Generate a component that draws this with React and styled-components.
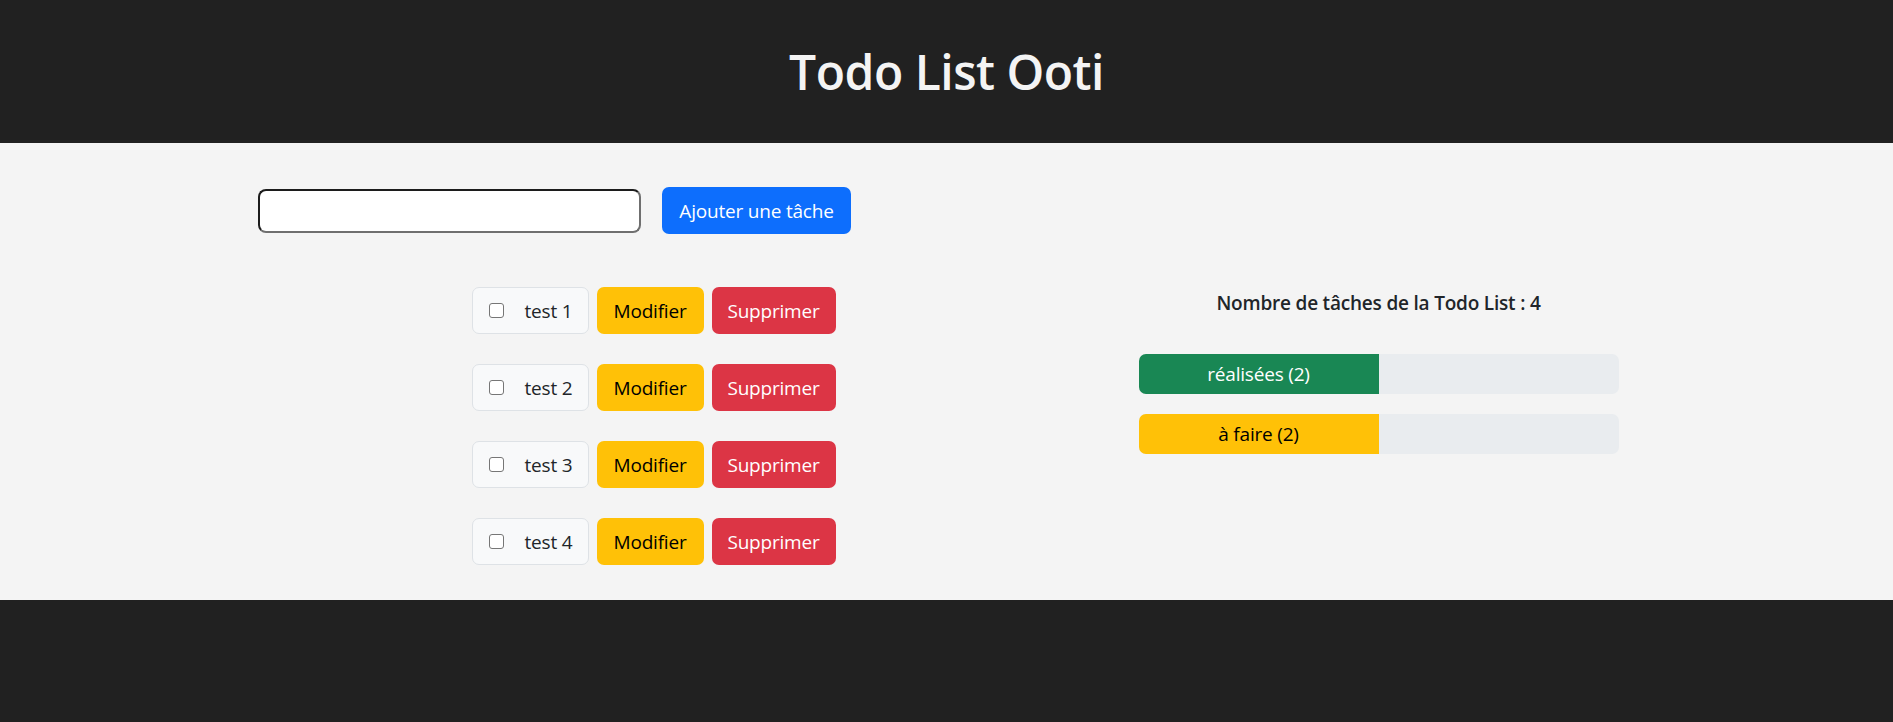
import styled, { createGlobalStyle } from "styled-components";

const tasks = [
  { id: 1, label: "test 1" },
  { id: 2, label: "test 2" },
  { id: 3, label: "test 3" },
  { id: 4, label: "test 4" },
];

const stats = [
  { id: "done", label: "réalisées (2)", value: 50, tone: "success" },
  { id: "todo", label: "à faire (2)", value: 50, tone: "warning" },
];

const tones = {
  primary: { bg: "#0d6efd", fg: "#ffffff" },
  warning: { bg: "#ffc107", fg: "#000000" },
  danger: { bg: "#dc3545", fg: "#ffffff" },
  success: { bg: "#198754", fg: "#ffffff" },
};

function App() {
  return (
    <>
      <GlobalStyle />
      <Header>
        <Title>Todo List Ooti</Title>
      </Header>
      <Main>
        <AddForm onSubmit={(e) => e.preventDefault()}>
          <TaskInput type="text" />
          <Button type="submit" tone="primary" width={189} height={47}>
            Ajouter une tâche
          </Button>
        </AddForm>
        <Columns>
          <TaskList>
            {tasks.map((task) => (
              <TaskRow key={task.id}>
                <TaskBox>
                  <Check type="checkbox" />
                  <TaskLabel>{task.label}</TaskLabel>
                </TaskBox>
                <Button tone="warning" width={107}>
                  Modifier
                </Button>
                <Button tone="danger" width={124}>
                  Supprimer
                </Button>
              </TaskRow>
            ))}
          </TaskList>
          <StatsPanel>
            <StatsTitle>Nombre de tâches de la Todo List : {tasks.length}</StatsTitle>
            <Bars>
              {stats.map((s) => (
                <Progress key={s.id}>
                  <ProgressFill tone={s.tone} style={{ width: `${s.value}%` }}>
                    {s.label}
                  </ProgressFill>
                </Progress>
              ))}
            </Bars>
          </StatsPanel>
        </Columns>
      </Main>
    </>
  );
}

export default App;

const GlobalStyle = createGlobalStyle`
  * {
    box-sizing: border-box;
  }
  body {
    margin: 0;
    background: #212121;
    font-family: "Open Sans", "Noto Sans", sans-serif;
    color: #212529;
  }
`;

const Header = styled.header`
  height: 143px;
  display: flex;
  align-items: center;
  justify-content: center;
  background: #212121;
`;

const Title = styled.h1`
  margin: 0;
  font-size: 48px;
  font-weight: 600;
  letter-spacing: -0.5px;
  color: #f4f4f4;
`;

const Main = styled.main`
  background: #f4f4f4;
  padding: 44px 0 35px 258px;
`;

const AddForm = styled.form`
  display: flex;
  align-items: center;
  gap: 21px;
`;

const TaskInput = styled.input`
  width: 383px;
  height: 44px;
  border-radius: 8px;
  border: 2px solid;
  border-color: #1c1c1c #6f6f6f #6f6f6f #1c1c1c;
  background: #ffffff;
  padding: 0 10px;
  font: inherit;
  font-size: 20px;
`;

const Button = styled.button`
  width: ${(p) => p.width}px;
  height: ${(p) => p.height || 47}px;
  display: inline-flex;
  align-items: center;
  justify-content: center;
  padding: 0;
  border: none;
  border-radius: 7px;
  background: ${(p) => tones[p.tone].bg};
  color: ${(p) => tones[p.tone].fg};
  font-family: inherit;
  font-size: 19px;
  letter-spacing: -0.2px;
  cursor: pointer;
`;

const Columns = styled.div`
  display: grid;
  grid-template-columns: 725px 725px;
  margin-top: 53px;
  margin-left: 33px;
`;

const TaskList = styled.div`
  display: flex;
  flex-direction: column;
  align-items: center;
  gap: 30px;
`;

const TaskRow = styled.div`
  display: flex;
  align-items: center;
  gap: 8px;
`;

const TaskBox = styled.label`
  width: 117px;
  height: 47px;
  display: flex;
  align-items: center;
  gap: 21px;
  padding-left: 16px;
  border: 1px solid #dee2e6;
  border-radius: 7px;
  background: #f8f9fa;
`;

const Check = styled.input`
  appearance: none;
  width: 15px;
  height: 15px;
  margin: 0;
  border: 1px solid #767676;
  border-radius: 3px;
  background: #ffffff;
`;

const TaskLabel = styled.span`
  font-size: 19px;
  color: #212529;
  letter-spacing: -0.2px;
`;

const StatsPanel = styled.div`
  display: flex;
  flex-direction: column;
  align-items: center;
`;

const StatsTitle = styled.h5`
  margin: 1px 0 0;
  font-size: 19px;
  line-height: 30px;
  font-weight: 600;
  letter-spacing: -0.2px;
  color: #212529;
`;

const Bars = styled.div`
  display: flex;
  flex-direction: column;
  gap: 20px;
  margin-top: 36px;
`;

const Progress = styled.div`
  width: 480px;
  height: 40px;
  display: flex;
  border-radius: 7px;
  overflow: hidden;
  background: #e9ecef;
`;

const ProgressFill = styled.div`
  display: flex;
  align-items: center;
  justify-content: center;
  background: ${(p) => tones[p.tone].bg};
  color: ${(p) => tones[p.tone].fg};
  font-size: 19px;
  letter-spacing: -0.2px;
`;
